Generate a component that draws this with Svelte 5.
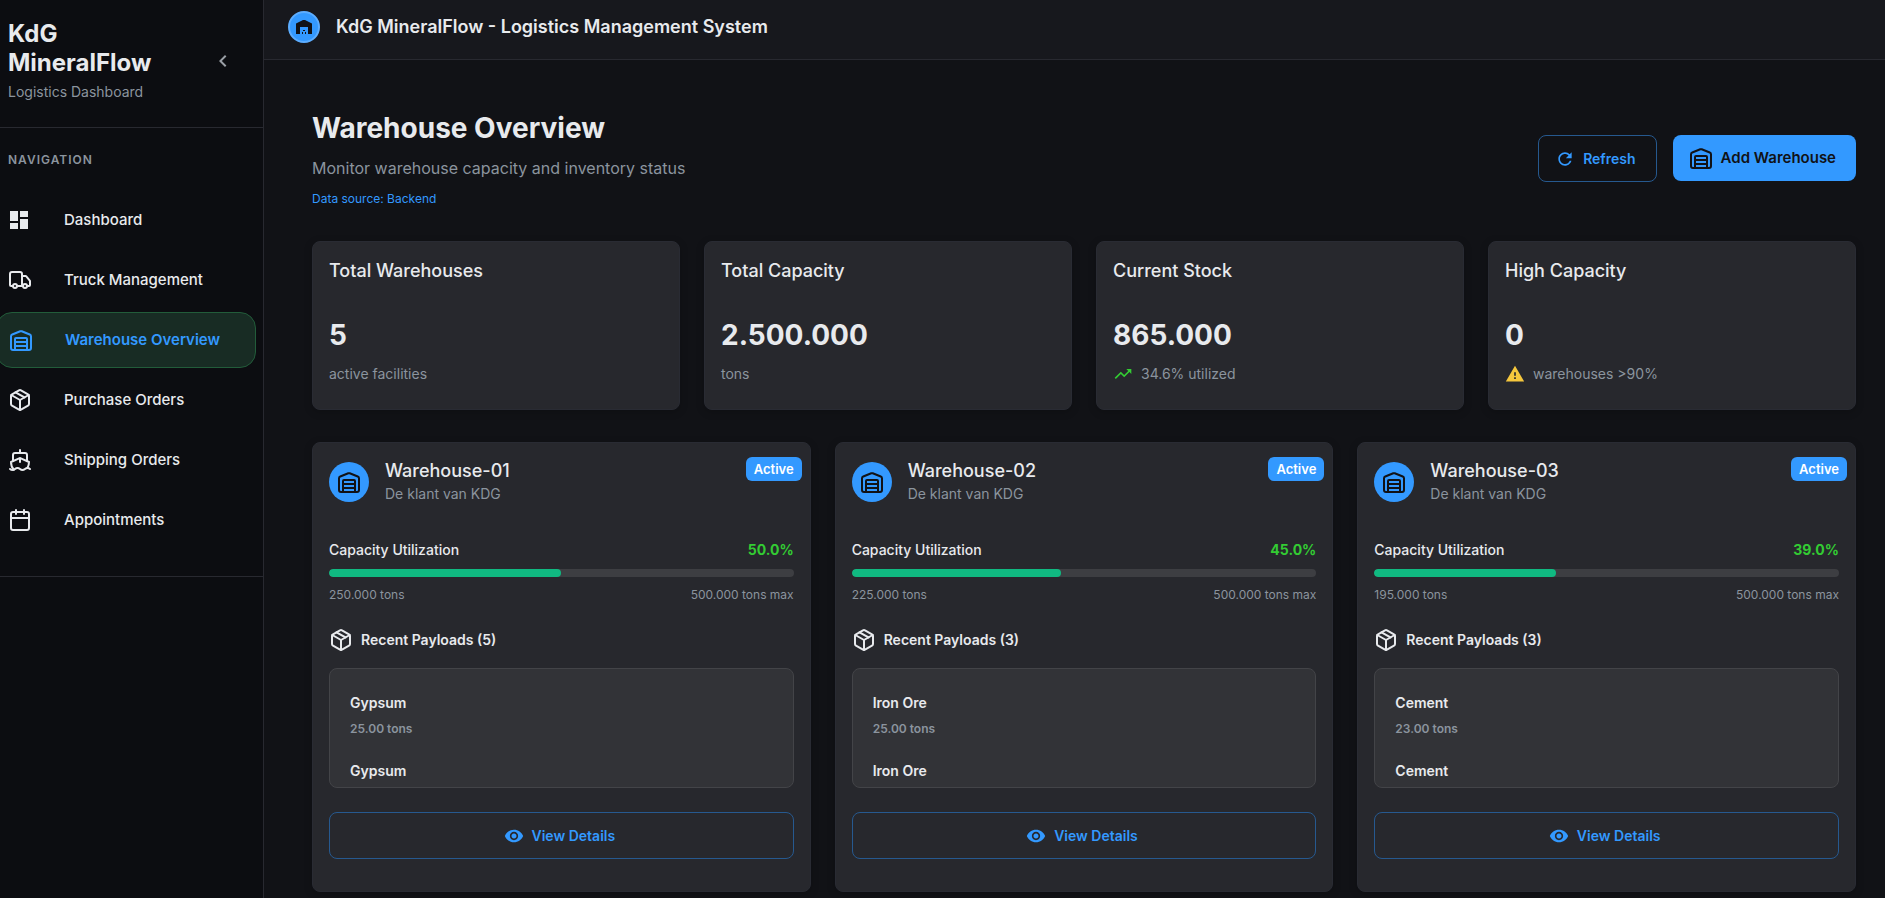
<script>
  const nav = [
    { label: 'Dashboard', icon: 'dashboard' },
    { label: 'Truck Management', icon: 'truck' },
    { label: 'Warehouse Overview', icon: 'warehouse', active: true },
    { label: 'Purchase Orders', icon: 'package' },
    { label: 'Shipping Orders', icon: 'ship' },
    { label: 'Appointments', icon: 'calendar' },
  ];

  const stats = [
    { title: 'Total Warehouses', value: '5', note: 'active facilities' },
    { title: 'Total Capacity', value: '2.500.000', note: 'tons' },
    { title: 'Current Stock', value: '865.000', note: '34.6% utilized', icon: 'trend' },
    { title: 'High Capacity', value: '0', note: 'warehouses >90%', icon: 'warning' },
  ];

  const warehouses = [
    {
      name: 'Warehouse-01', percent: 50, stock: '250.000', count: 5,
      payloads: [{ material: 'Gypsum', amount: '25.00' }, { material: 'Gypsum' }],
    },
    {
      name: 'Warehouse-02', percent: 45, stock: '225.000', count: 3,
      payloads: [{ material: 'Iron Ore', amount: '25.00' }, { material: 'Iron Ore' }],
    },
    {
      name: 'Warehouse-03', percent: 39, stock: '195.000', count: 3,
      payloads: [{ material: 'Cement', amount: '23.00' }, { material: 'Cement' }],
    },
  ];
</script>

{#snippet icon(name)}
  {#if name === 'dashboard'}
    <svg class="icon solid small" viewBox="3 3 18 18" aria-hidden="true">
      <path d="M3 13h8V3H3v10zm0 8h8v-6H3v6zm10 0h8V11h-8v10zm0-18v6h8V3h-8z" />
    </svg>
  {:else if name === 'truck'}
    <svg class="icon" viewBox="0 0 24 24" aria-hidden="true">
      <path d="M14 18V6a2 2 0 0 0-2-2H4a2 2 0 0 0-2 2v11a1 1 0 0 0 1 1h2" />
      <path d="M15 18H9" />
      <path d="M19 18h2a1 1 0 0 0 1-1v-3.65a1 1 0 0 0-.22-.624l-3.48-4.35A1 1 0 0 0 17.52 8H14" />
      <circle cx="17" cy="18" r="2" /><circle cx="7" cy="18" r="2" />
    </svg>
  {:else if name === 'warehouse'}
    <svg class="icon" viewBox="0 0 24 24" aria-hidden="true">
      <path d="M22 8.35V20a2 2 0 0 1-2 2H4a2 2 0 0 1-2-2V8.35A2 2 0 0 1 3.26 6.5l8-3.2a2 2 0 0 1 1.48 0l8 3.2A2 2 0 0 1 22 8.35Z" />
      <path d="M6 18h12M6 14h12" />
      <path d="M18 22V11a1 1 0 0 0-1-1H7a1 1 0 0 0-1 1v11" />
    </svg>
  {:else if name === 'package'}
    <svg class="icon" viewBox="0 0 24 24" aria-hidden="true">
      <path d="M11 21.73a2 2 0 0 0 2 0l7-4A2 2 0 0 0 21 16V8a2 2 0 0 0-1-1.73l-7-4a2 2 0 0 0-2 0l-7 4A2 2 0 0 0 3 8v8a2 2 0 0 0 1 1.73z" />
      <path d="M12 22V12" /><path d="M3.3 7 12 12l8.7-5" /><path d="m7.5 4.27 9 5.15" />
    </svg>
  {:else if name === 'ship'}
    <svg class="icon" viewBox="0 0 24 24" aria-hidden="true">
      <path d="M12 10.189V14" /><path d="M12 2v3" />
      <path d="M19 13V7a2 2 0 0 0-2-2H7a2 2 0 0 0-2 2v6" />
      <path d="M19.38 20A11.6 11.6 0 0 0 21 14l-8.188-3.639a2 2 0 0 0-1.624 0L3 14a11.6 11.6 0 0 0 2.81 7.76" />
      <path d="M2 21c.6.5 1.2 1 2.5 1 2.5 0 2.5-2 5-2 1.3 0 1.9.5 2.5 1s1.2 1 2.5 1c2.5 0 2.5-2 5-2 1.3 0 1.9.5 2.5 1" />
    </svg>
  {:else if name === 'calendar'}
    <svg class="icon" viewBox="0 0 24 24" aria-hidden="true">
      <path d="M8 2v4M16 2v4M3 10h18" /><rect x="3" y="4" width="18" height="18" rx="2" />
    </svg>
  {:else if name === 'trend'}
    <svg class="icon solid note-icon trend" viewBox="0 0 24 24" aria-hidden="true">
      <path d="m16 6 2.29 2.29-4.88 4.88-4-4L2 16.59 3.41 18l6-6 4 4 6.3-6.29L22 12V6z" />
    </svg>
  {:else if name === 'warning'}
    <svg class="icon solid note-icon warning" viewBox="0 0 24 24" aria-hidden="true">
      <path d="M1 21h22L12 2 1 21zm12-3h-2v-2h2v2zm0-4h-2v-4h2v4z" />
    </svg>
  {/if}
{/snippet}

<div class="app">
  <aside class="sidebar">
    <div class="brand">
      <div>
        <h2>KdG MineralFlow</h2>
        <p>Logistics Dashboard</p>
      </div>
      <button class="collapse" aria-label="Collapse sidebar">
        <svg viewBox="0 0 24 24" aria-hidden="true"><path d="M15.41 7.41 14 6l-6 6 6 6 1.41-1.41L10.83 12z" /></svg>
      </button>
    </div>
    <nav>
      <h3>Navigation</h3>
      <ul>
        {#each nav as item}
          <li>
            <a href="#top" class:active={item.active} aria-current={item.active ? 'page' : undefined}>
              <span class="nav-icon">{@render icon(item.icon)}</span>
              <span>{item.label}</span>
            </a>
          </li>
        {/each}
      </ul>
    </nav>
  </aside>

  <div class="main">
    <header class="topbar">
      <span class="logo">
        <svg viewBox="0 0 16 14" aria-hidden="true">
          <path class="roof" d="M0 3.5 7 0h2l7 3.5V14h-4V7H4v7H0z" />
          <path class="roof" d="M7 10h2v1H7zM6 12h1v2H6zM9 12h1v2H9z" />
        </svg>
      </span>
      <span class="app-title">KdG MineralFlow - Logistics Management System</span>
    </header>

    <main>
      <div class="page-head">
        <div>
          <h1>Warehouse Overview</h1>
          <p class="lead">Monitor warehouse capacity and inventory status</p>
          <p class="source">Data source: Backend</p>
        </div>
        <div class="actions">
          <button class="outline">
            <svg viewBox="0 0 24 24" aria-hidden="true"><path d="M17.65 6.35C16.2 4.9 14.21 4 12 4c-4.42 0-7.99 3.58-7.99 8s3.57 8 7.99 8c3.73 0 6.84-2.55 7.73-6h-2.08c-.82 2.33-3.04 4-5.65 4-3.31 0-6-2.69-6-6s2.69-6 6-6c1.66 0 3.14.69 4.22 1.78L13 11h7V4l-2.35 2.35z" /></svg>
            Refresh
          </button>
          <button class="primary">{@render icon('warehouse')}Add Warehouse</button>
        </div>
      </div>

      <section class="stats">
        {#each stats as stat}
          <article class="card stat">
            <h3>{stat.title}</h3>
            <strong>{stat.value}</strong>
            <p>
              {#if stat.icon}{@render icon(stat.icon)}{/if}
              <span>{stat.note}</span>
            </p>
          </article>
        {/each}
      </section>

      <section class="warehouses">
        {#each warehouses as w}
          <article class="card warehouse">
            <span class="badge">Active</span>
            <div class="identity">
              <span class="avatar">{@render icon('warehouse')}</span>
              <div>
                <h3>{w.name}</h3>
                <p>De klant van KDG</p>
              </div>
            </div>
            <div class="row usage">
              <span>Capacity Utilization</span>
              <strong>{w.percent.toFixed(1)}%</strong>
            </div>
            <div class="track"><div class="fill" style:width="{w.percent}%"></div></div>
            <div class="row limits">
              <span>{w.stock} tons</span>
              <span>500.000 tons max</span>
            </div>
            <h4>{@render icon('package')}Recent Payloads ({w.count})</h4>
            <ul class="payloads">
              {#each w.payloads as payload}
                <li>
                  <span>{payload.material}</span>
                  {#if payload.amount}<small>{payload.amount} tons</small>{/if}
                </li>
              {/each}
            </ul>
            <button class="outline details">
              <svg viewBox="0 0 24 24" aria-hidden="true"><path d="M12 4.5C7 4.5 2.73 7.61 1 12c1.73 4.39 6 7.5 11 7.5s9.27-3.11 11-7.5c-1.73-4.39-6-7.5-11-7.5zM12 17c-2.76 0-5-2.24-5-5s2.24-5 5-5 5 2.24 5 5-2.24 5-5 5zm0-8c-1.66 0-3 1.34-3 3s1.34 3 3 3 3-1.34 3-3-1.34-3-3-3z" /></svg>
              View Details
            </button>
          </article>
        {/each}
      </section>
    </main>
  </div>
</div>

<style>
  :global(body) {
    background: #111216;
  }
  .app {
    display: flex;
    min-height: 100vh;
    color: #e8eaed;
    font-family: Inter, sans-serif;
    font-size: 14px;
    line-height: 20px;
  }
  .app *,
  .app {
    box-sizing: border-box;
  }
  h1, h2, h3, h4, p, ul {
    margin: 0;
    padding: 0;
  }
  ul {
    list-style: none;
  }
  button {
    font: inherit;
    cursor: pointer;
  }
  .icon {
    width: 24px;
    height: 24px;
    flex: none;
    fill: none;
    stroke: currentColor;
    stroke-width: 2;
    stroke-linecap: round;
    stroke-linejoin: round;
  }
  .icon.solid {
    fill: currentColor;
    stroke: none;
  }
  .icon.small {
    width: 18px;
    height: 18px;
    margin-left: 2px;
  }

  .sidebar {
    flex: 0 0 264px;
    background: #0c0d11;
    border-right: 1px solid #282930;
  }
  .brand {
    display: flex;
    align-items: center;
    justify-content: space-between;
    padding: 19px 20px 25px 8px;
    border-bottom: 1px solid #282930;
  }
  .brand h2 {
    width: 160px;
    font-size: 24px;
    line-height: 29px;
    font-weight: 700;
  }
  .brand p {
    margin-top: 5px;
    color: #8b949e;
  }
  .collapse {
    display: grid;
    place-items: center;
    width: 40px;
    height: 40px;
    padding: 0;
    background: none;
    border: 0;
    color: #9a9fa6;
  }
  .collapse svg {
    width: 24px;
    height: 24px;
    fill: currentColor;
  }
  nav {
    padding: 22px 7px 28px 0;
    border-bottom: 1px solid #282930;
  }
  nav h3 {
    padding: 0 8px;
    margin-bottom: 22px;
    font-size: 12px;
    font-weight: 600;
    letter-spacing: 1px;
    text-transform: uppercase;
    color: #8b949e;
  }
  nav ul {
    display: grid;
    gap: 4px;
    margin-left: -4px;
  }
  nav a {
    display: flex;
    align-items: center;
    height: 56px;
    padding-left: 12px;
    border-radius: 16px;
    color: inherit;
    font-size: 15px;
    font-weight: 500;
    text-decoration: none;
  }
  nav a.active {
    background: #182c24;
    border: 1px solid #225c3a;
    color: #3399ff;
    font-weight: 600;
  }
  .nav-icon {
    display: flex;
    width: 56px;
  }

  .main {
    flex: 1;
    min-width: 0;
  }
  .topbar {
    display: flex;
    align-items: center;
    gap: 16px;
    height: 60px;
    padding: 0 24px 5px;
    background: #17181d;
    border-bottom: 1px solid #282930;
  }
  .logo {
    display: grid;
    place-items: center;
    width: 32px;
    height: 32px;
    border: 2px solid #5cadff;
    border-radius: 50%;
    background: #3399ff;
  }
  .logo svg {
    width: 16px;
    height: 14px;
  }
  .roof {
    fill: #111216;
  }
  .app-title {
    font-size: 18px;
    font-weight: 600;
  }
  main {
    padding: 48px 29px 5px 48px;
  }
  .page-head {
    display: flex;
    align-items: center;
    justify-content: space-between;
    margin-bottom: 32px;
  }
  h1 {
    font-size: 28px;
    line-height: 40px;
    font-weight: 700;
  }
  .lead {
    margin-top: 8px;
    font-size: 16px;
    line-height: 24px;
    color: #8b949e;
  }
  .source {
    margin-top: 9px;
    font-size: 12px;
    color: #3399ff;
  }
  .actions {
    display: flex;
    align-items: flex-start;
    gap: 16px;
  }
  .outline,
  .primary {
    display: flex;
    align-items: center;
    justify-content: center;
    gap: 8px;
    padding: 0 20px 0 16px;
    border-radius: 8px;
    font-weight: 600;
  }
  .outline {
    height: 47px;
    background: none;
    border: 1px solid #26598f;
    color: #3399ff;
  }
  .outline svg {
    width: 20px;
    height: 20px;
    fill: currentColor;
  }
  .primary {
    height: 46px;
    background: #3399ff;
    border: 0;
    color: #111216;
    font-size: 15px;
  }

  .card {
    background: #27282d;
    border: 1px solid #292b33;
    border-radius: 8px;
    box-shadow: 0 2px 8px rgb(0 0 0 / 20%);
  }
  .card h3 {
    font-size: 18px;
    font-weight: 500;
  }
  .stats {
    display: grid;
    grid-template-columns: repeat(4, 1fr);
    gap: 24px;
    margin-bottom: 32px;
  }
  .stat {
    padding: 19px 16px 25px;
  }
  .stat h3 {
    margin-bottom: 37px;
  }
  .stat strong {
    display: block;
    font-size: 28px;
    line-height: 34px;
    font-weight: 700;
  }
  .stat p {
    display: flex;
    align-items: center;
    gap: 8px;
    margin-top: 12px;
    color: #8b949e;
  }
  .note-icon {
    width: 20px;
    height: 20px;
  }
  .trend {
    color: #33cc33;
  }
  .warning {
    color: #f5c73d;
  }

  .warehouses {
    display: grid;
    grid-template-columns: repeat(3, 1fr);
    gap: 24px;
  }
  .warehouse {
    position: relative;
    padding: 16px 16px 32px;
  }
  .badge {
    position: absolute;
    top: 14px;
    right: 8px;
    padding: 0 8px;
    border-radius: 6px;
    background: #3399ff;
    color: #fff;
    line-height: 24px;
    font-size: 13px;
    font-weight: 600;
  }
  .identity {
    display: flex;
    align-items: center;
    gap: 16px;
    margin-bottom: 35px;
  }
  .identity h3 {
    line-height: 24px;
  }
  .identity p {
    color: #8b949e;
    line-height: 22px;
  }
  .avatar {
    display: grid;
    place-items: center;
    width: 40px;
    height: 40px;
    border-radius: 50%;
    background: #3399ff;
    color: #111216;
  }
  .row {
    display: flex;
    justify-content: space-between;
  }
  .usage {
    font-weight: 500;
  }
  .usage strong {
    font-weight: 700;
    color: #33cc33;
  }
  .track {
    height: 8px;
    margin: 9px 0 8px;
    border-radius: 4px;
    background: #3d3e42;
    overflow: hidden;
  }
  .fill {
    height: 100%;
    border-radius: 4px;
    background: #10b981;
  }
  .limits {
    font-size: 12px;
    color: #8b949e;
  }
  h4 {
    display: flex;
    align-items: center;
    gap: 8px;
    margin: 23px 0 16px;
    font-size: 14px;
    font-weight: 600;
  }
  .payloads {
    display: grid;
    align-content: start;
    gap: 22px;
    height: 120px;
    padding: 24px 20px 0;
    margin-bottom: 24px;
    border: 1px solid #434448;
    border-radius: 8px;
    background: #323337;
    overflow-y: auto;
  }
  .payloads li {
    display: grid;
    gap: 6px;
    font-weight: 600;
  }
  .payloads small {
    font-size: 12px;
    color: #8b949e;
  }
  .details {
    width: 100%;
  }
</style>
